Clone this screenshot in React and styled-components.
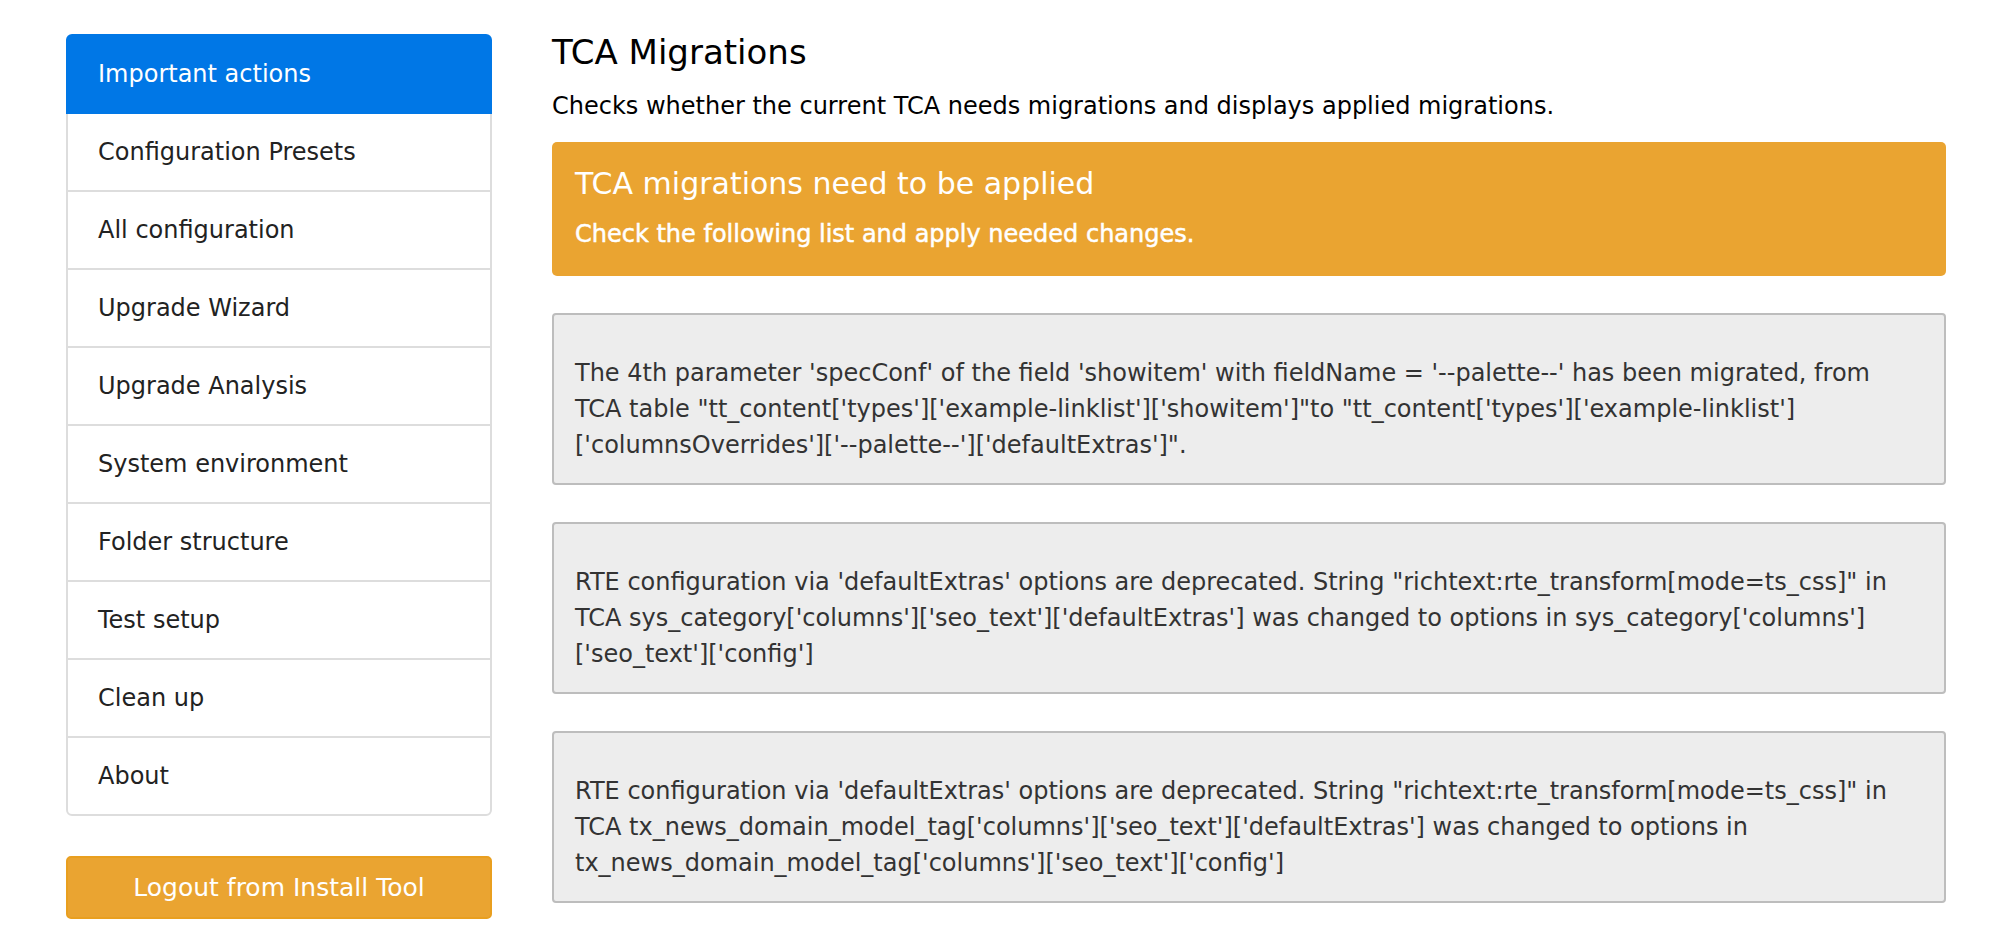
import React from "react";
import styled, { createGlobalStyle } from "styled-components";

const GlobalStyle = createGlobalStyle`
  html, body {
    margin: 0;
    padding: 0;
    background: #ffffff;
  }
  body {
    font-family: "DejaVu Sans", Verdana, sans-serif;
    color: #000;
  }
  * { box-sizing: border-box; }
`;

const Page = styled.div`
  display: flex;
  align-items: flex-start;
  gap: 60px;
  padding: 34px 50px 0 66px;
`;

const Sidebar = styled.nav`
  width: 426px;
  flex: none;
  display: flex;
  flex-direction: column;
`;

const NavList = styled.div`
  display: flex;
  flex-direction: column;
`;

const NavItem = styled.a`
  position: relative;
  display: block;
  padding: 20px 30px;
  font-size: 24px;
  line-height: 36px;
  color: ${(p) => (p.$active ? "#ffffff" : "#222222")};
  background: ${(p) => (p.$active ? "#0077e6" : "#ffffff")};
  border: 2px solid ${(p) => (p.$active ? "#0077e6" : "#dddddd")};
  z-index: ${(p) => (p.$active ? 2 : 1)};
  text-decoration: none;
  margin-top: -2px;
  &:first-child {
    margin-top: 0;
    border-top-left-radius: 6px;
    border-top-right-radius: 6px;
  }
  &:last-child {
    border-bottom-left-radius: 6px;
    border-bottom-right-radius: 6px;
  }
`;

const LogoutButton = styled.button`
  margin-top: 40px;
  height: 63px;
  width: 100%;
  display: flex;
  align-items: center;
  justify-content: center;
  background: #eaa431;
  border: 2px solid #e99f1f;
  border-radius: 5px;
  color: #ffffff;
  font-family: "DejaVu Sans", Verdana, sans-serif;
  font-size: 25px;
  line-height: 36px;
  padding: 0 20px;
`;

const Main = styled.main`
  flex: 1;
  min-width: 0;
`;

const Title = styled.h1`
  margin: 0;
  font-size: 34px;
  line-height: 36px;
  font-weight: normal;
  color: #000;
`;

const Lead = styled.p`
  margin: 18px 0 0;
  font-size: 24px;
  line-height: 36px;
  color: #000;
`;

const Alert = styled.div`
  margin-top: 18px;
  padding: 25px 22px 24px 23px;
  background: #eaa431;
  border-radius: 5px;
  color: #ffffff;
`;

const AlertTitle = styled.h4`
  margin: 0;
  font-size: 30px;
  line-height: 33px;
  font-weight: normal;
`;

const AlertText = styled.p`
  margin: 16px 0 0;
  font-size: 24px;
  line-height: 36px;
  -webkit-text-stroke: 0.5px #ffffff;
`;

const MessageBox = styled.div`
  margin-top: 37px;
  padding: 40px 21px 20px 21px;
  background: #ededed;
  border: 2px solid #bdbdbd;
  border-radius: 4px;
  color: #333333;
  font-size: 24px;
  line-height: 36px;
`;

const navItems = [
  "Important actions",
  "Configuration Presets",
  "All configuration",
  "Upgrade Wizard",
  "Upgrade Analysis",
  "System environment",
  "Folder structure",
  "Test setup",
  "Clean up",
  "About",
];

const messages = [
  "The 4th parameter 'specConf' of the field 'showitem' with fieldName = '--palette--' has been migrated, from TCA table \"tt_content['types']['example-linklist']['showitem']\"to \"tt_content['types']['example-linklist']['columnsOverrides']['--palette--']['defaultExtras']\".",
  "RTE configuration via 'defaultExtras' options are deprecated. String \"richtext:rte_transform[mode=ts_css]\" in TCA sys_category['columns']['seo_text']['defaultExtras'] was changed to options in sys_category['columns']['seo_text']['config']",
  "RTE configuration via 'defaultExtras' options are deprecated. String \"richtext:rte_transform[mode=ts_css]\" in TCA tx_news_domain_model_tag['columns']['seo_text']['defaultExtras'] was changed to options in tx_news_domain_model_tag['columns']['seo_text']['config']",
];

export default function App() {
  return (
    <>
      <GlobalStyle />
      <Page>
        <Sidebar>
          <NavList>
            {navItems.map((label, i) => (
              <NavItem key={label} href="#" $active={i === 0}>
                {label}
              </NavItem>
            ))}
          </NavList>
          <LogoutButton type="button">Logout from Install Tool</LogoutButton>
        </Sidebar>
        <Main>
          <Title>TCA Migrations</Title>
          <Lead>
            Checks whether the current TCA needs migrations and displays applied
            migrations.
          </Lead>
          <Alert>
            <AlertTitle>TCA migrations need to be applied</AlertTitle>
            <AlertText>Check the following list and apply needed changes.</AlertText>
          </Alert>
          {messages.map((m, i) => (
            <MessageBox key={i}>{m}</MessageBox>
          ))}
        </Main>
      </Page>
    </>
  );
}
